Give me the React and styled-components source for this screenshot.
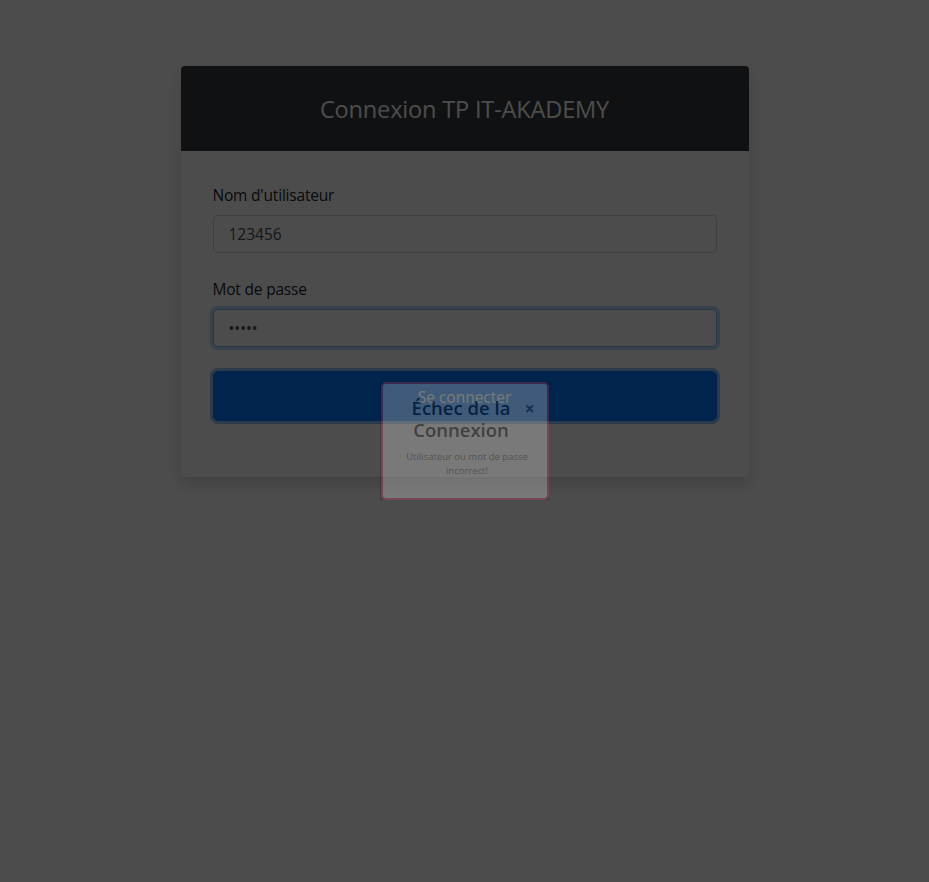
import React from "react";
import styled, { createGlobalStyle } from "styled-components";

const GlobalStyle = createGlobalStyle`
  * { box-sizing: border-box; }
  body {
    margin: 0;
    background: #fff;
    font-family: "Open Sans", "Noto Sans", sans-serif;
    color: #212529;
  }
`;

const Page = styled.div`
  min-height: 882px;
  padding-top: 66px;
  display: flex;
  justify-content: center;
  align-items: flex-start;
`;

const Card = styled.div`
  width: 568px;
  background: #fff;
  border-radius: 4px;
  overflow: hidden;
  box-shadow: 0 8px 16px rgba(0, 0, 0, 0.15);
`;

const CardHeader = styled.div`
  background: #343a40;
  height: 85px;
  display: flex;
  align-items: center;
  justify-content: center;
`;

const Title = styled.h4`
  margin: 0;
  font-size: 23.6px;
  font-weight: 400;
  color: #fff;
  letter-spacing: -0.2px;
`;

const CardBody = styled.form`
  padding: 32px;
  display: flex;
  flex-direction: column;
`;

const Field = styled.div`
  display: flex;
  flex-direction: column;
  margin-bottom: 24px;
`;

const Label = styled.label`
  font-size: 15.5px;
  line-height: 24px;
  margin-bottom: 8px;
  letter-spacing: -0.2px;
`;

const Input = styled.input`
  height: 38px;
  padding: 6px 15px;
  font-family: inherit;
  font-size: 15.5px;
  color: #495057;
  border: 1px solid ${({ $focus }) => ($focus ? "#80bdff" : "#ced4da")};
  border-radius: 4px;
  outline: none;
  box-shadow: ${({ $focus }) =>
    $focus ? "0 0 0 3px rgba(0, 123, 255, 0.25)" : "none"};
`;

const Button = styled.button`
  height: 50px;
  margin-bottom: 24px;
  padding-top: 2px;
  border: 1px solid #007bff;
  border-radius: 5px;
  background: #007bff;
  color: #fff;
  font-family: inherit;
  font-size: 15.5px;
  box-shadow: 0 0 0 3px rgba(38, 143, 255, 0.5);
`;

const Backdrop = styled.div`
  position: fixed;
  inset: 0;
  background: rgba(0, 0, 0, 0.7);
  display: flex;
  align-items: center;
  justify-content: center;
`;

const Popup = styled.div`
  width: 168px;
  height: 118px;
  background: #fff;
  border: 2px solid #f0386a;
  border-radius: 5px;
  opacity: 0.25;
  padding: 13px 11px 0 16px;
  text-align: center;
`;

const PopupHead = styled.div`
  display: flex;
  align-items: flex-start;
`;

const PopupTitle = styled.div`
  flex: 1;
  font-size: 18.5px;
  font-weight: 600;
  line-height: 22px;
  color: #1a1a1a;
`;

const Close = styled.span`
  width: 12px;
  margin-top: 2px;
  font-size: 17px;
  font-weight: 700;
  line-height: 20px;
  color: #555;
`;

const PopupText = styled.p`
  margin: 9px 0 0;
  font-size: 9.5px;
  line-height: 14px;
  color: #666;
`;

export default function App() {
  return (
    <>
      <GlobalStyle />
      <Page>
        <Card>
          <CardHeader>
            <Title>Connexion TP IT-AKADEMY</Title>
          </CardHeader>
          <CardBody onSubmit={(e) => e.preventDefault()}>
            <Field>
              <Label>Nom d'utilisateur</Label>
              <Input type="text" defaultValue="123456" />
            </Field>
            <Field>
              <Label>Mot de passe</Label>
              <Input type="password" defaultValue="abcde" $focus />
            </Field>
            <Button type="submit">Se connecter</Button>
          </CardBody>
        </Card>
      </Page>
      <Backdrop>
        <Popup>
          <PopupHead>
            <PopupTitle>Échec de la Connexion</PopupTitle>
            <Close>×</Close>
          </PopupHead>
          <PopupText>Utilisateur ou mot de passe incorrect!</PopupText>
        </Popup>
      </Backdrop>
    </>
  );
}
